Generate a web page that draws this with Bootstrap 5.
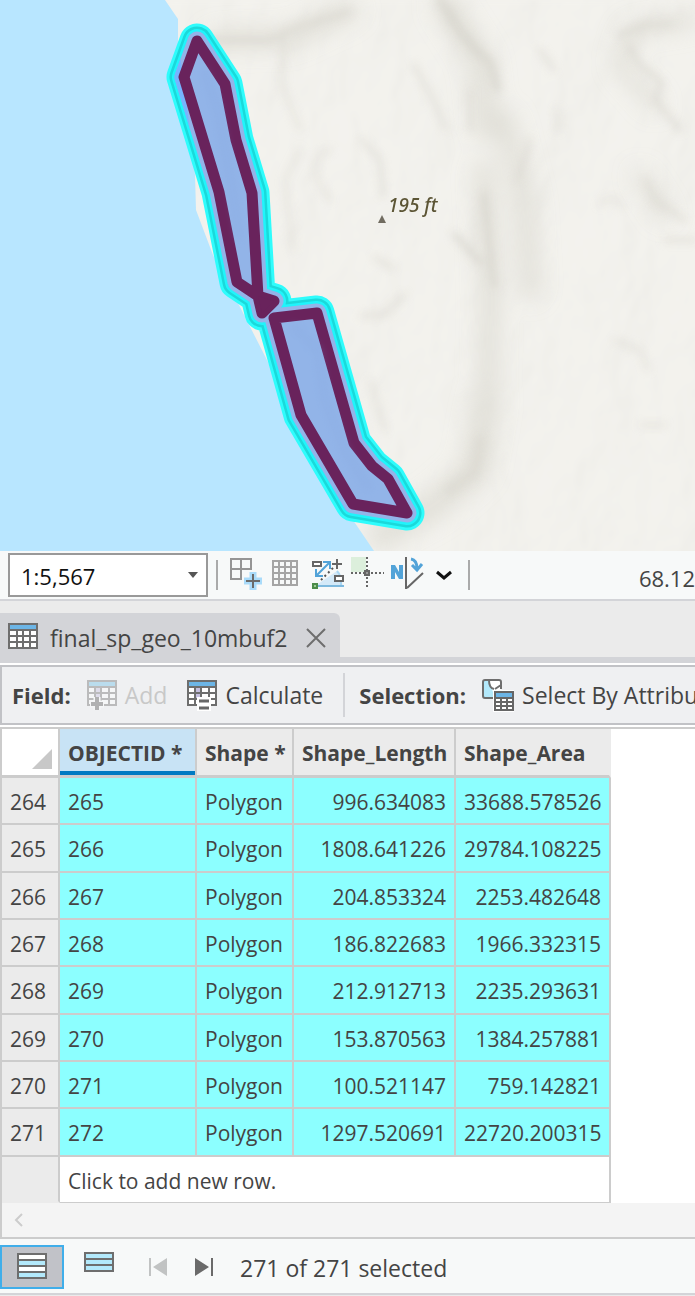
<!DOCTYPE html>
<html lang="en">
<head>
<meta charset="utf-8">
<meta name="viewport" content="width=device-width, initial-scale=1">
<title>final_sp_geo_10mbuf2</title>
<link href="https://cdn.jsdelivr.net/npm/bootstrap@5.3.0/dist/css/bootstrap.min.css" rel="stylesheet">
<style>
  body { font-family: "Open Sans", "Noto Sans", sans-serif; font-size: 23px; line-height: 28px; color: #444; background: #ebebeb; overflow-x: hidden; }
  button, select { font: inherit; color: inherit; }
  .plain-btn { background: none; border: 0; padding: 0; display: flex; align-items: center; white-space: nowrap; }
  svg { display: block; flex: none; }
  .map-view { height: 551px; background: #f2f2ec; }
  .map-label { font: italic 500 19px "Noto Sans", sans-serif; fill: #5c5535; }
  .map-bar { height: 50px; background: #f7f9f9; border-bottom: 2px solid #d3d4d8; padding: 2px 0 2px 8px; }
  .map-bar .plain-btn { padding-bottom: 4px; }
  .map-bar .more-btn { padding-bottom: 0; margin-left: 8px; }
  .scale-box { position: relative; width: 200px; height: 44px; }
  .scale-box select { appearance: none; width: 100%; height: 100%; border: 2px solid #999; background: #fff; color: #111; padding: 2px 11px 0; border-radius: 0; font-size: 22px; }
  .scale-box::after { content: ""; position: absolute; right: 10px; top: 19px; border: 5px solid transparent; border-top: 6px solid #555; border-bottom: 0; pointer-events: none; }
  .coords { font-size: 22px; padding-top: 5px; }
  .bar-rule { width: 2px; height: 30px; background: #aaa; }
  .tab-strip { height: 62px; padding-top: 12px; border-bottom: 6px solid #d3d4d8; }
  .view-tab { width: 340px; height: 50px; background: #d3d4d8; border-top-right-radius: 6px; padding: 0 13px 0 8px; margin-bottom: -6px; gap: 12px; }
  .field-bar { height: 60px; margin: 2px 0; background: #eff0f2; border: 2px solid #c1c2c6; border-right: 0; padding-left: 10px; white-space: nowrap; overflow: hidden; }
  .field-bar > * { flex: none; }
  .bar-title { font-size: 22px; }
  .calc-btn { margin: 0 20px; }
  .select-title { margin-left: 14px; }
  .add-text { color: #c8c8c8; }
  .panel-gap { background: #fff; }
  .field-rule { width: 2px; height: 44px; background: #d3d4d8; }
  .grid-frame { border: 2px solid #ccc; border-right: 0; background: #fff; }
  .attr-grid { width: 609px; table-layout: fixed; border-collapse: separate; border-spacing: 0; white-space: nowrap; font-size: 21px; line-height: 24px; }
  .attr-grid th, .attr-grid td { padding: 2px 8px 0; border-right: 2px solid #ccc; border-bottom: 2px solid #ccc; }
  .attr-grid thead th { height: 49px; background: #ebebeb; border-bottom: 3px solid #ccc; font-weight: 700; }
  .attr-grid thead th:first-child { background: #fff; vertical-align: bottom; padding: 0 6px 6px; }
  .attr-grid thead th:last-child { border-right-color: #ebebeb; }
  .attr-grid thead .sorted { background: #c8e3f5; box-shadow: inset 0 -4px #007ac2; }
  .attr-grid tbody tr { height: 47px; }
  .attr-grid tbody tr:nth-child(3n+2) { height: 48px; }
  .attr-grid tbody td { background: #8cffff; }
  .attr-grid tbody th, .attr-grid tfoot th { background: #ebebeb; font-weight: 400; }
  .attr-grid tfoot tr { height: 46px; }
  .attr-grid tfoot th { border-bottom-color: #ebebeb; }
  .attr-grid tfoot td { border-bottom-width: 1px; background: #fff; }
  .scroll-row { height: 34px; background: #f4f4f4; padding-left: 12px; }
  .status-bar { height: 56px; background: #f7f9f9; border-bottom: 2px solid #d3d4d8; padding-top: 2px; }
  .mode-btn { width: 64px; height: 44px; justify-content: center; padding-bottom: 2px; }
  .mode-btn.current { background: #c1c2c8; border: 2px solid #40aeea; }
  .mode-btn.other { margin-left: 3px; padding-bottom: 4px; }
  .first-btn { margin-left: 12px; }
  .sel-count { margin-left: 21px; padding-top: 2px; }
</style>
</head>
<body>
<main>
  <section class="map-view" aria-label="Map">
    <svg width="100%" height="551" viewBox="0 0 695 551" preserveAspectRatio="xMinYMin slice">
      <defs>
        <filter id="soft" x="-20%" y="-20%" width="140%" height="140%"><feGaussianBlur stdDeviation="4"/></filter>
        <filter id="soft-wide" x="-50%" y="-50%" width="200%" height="200%"><feGaussianBlur stdDeviation="11"/></filter>
        <filter id="relief" x="0" y="0" width="100%" height="100%">
          <feTurbulence type="fractalNoise" baseFrequency=".014 .008" numOctaves="4" seed="8"/>
          <feDiffuseLighting surfaceScale="14" lighting-color="#fff"><feDistantLight azimuth="225" elevation="60"/></feDiffuseLighting>
          <feGaussianBlur stdDeviation="2"/>
        </filter>
        <path id="sea" d="M0 0H165L178 19V40L190 130L195 175L196 210L213 255L240 307L268 362L300 440L355 523L374 551H0Z"/>
        <clipPath id="sea-clip"><use href="#sea"/></clipPath>
        <path id="parcels" stroke-linejoin="round" d="M197 41L225 84L236 140L252 193L258 296L237 282L219 192L184 77ZM258 296L274 301L262 313ZM274 318L317 313L354 443L372 466L388 479L407 513L353 504L301 415Z"/>
      </defs>
      <rect width="2400" height="1300" fill="#f3f2ed"/>
      <rect width="2400" height="1300" filter="url(#relief)" opacity=".07"/>
      <g fill="none" stroke="#dcdad2" stroke-linecap="round" filter="url(#soft-wide)" opacity=".75">
        <path stroke-width="24" d="M445 5L480 60L487 130"/>
        <path stroke-width="20" d="M484 170L488 240L490 300L488 400M505 120L525 200L530 290M215 40L290 38L350 10"/>
        <path stroke-width="14" d="M695 20L630 30L620 65L655 105M640 175L665 215"/>
        <path stroke-width="28" d="M487 400L475 470L435 505L380 535"/>
      </g>
      <g fill="none" stroke="#d3d0c8" stroke-linecap="round" filter="url(#soft)" opacity=".6">
        <path stroke-width="9" d="M440 0L462 34L476 50L490 62L497 88"/>
        <path stroke-width="7" d="M484 195L488 230L491 262L494 285M455 235L480 262"/>
        <path stroke-width="4" d="M414 65L433 100L447 130M362 140L380 160L383 195M540 50L554 70M558 110L557 130M470 90V130M530 140L518 180"/>
        <path stroke-width="5" d="M620 35L645 25L672 24M628 45L640 65L662 82L655 100L680 130M200 40L270 40L300 26L350 12"/>
        <path stroke-width="4" d="M646 180L655 200L685 220M665 240H695M362 316L386 314L404 295M375 258L392 268"/>
        <path stroke-width="3" d="M284 40L282 85L300 130M300 150L285 180L293 250M330 150Q300 160 330 200M370 380L385 430"/>
        <path stroke-width="12" d="M450 490L475 472L480 440" opacity=".6"/>
        <path stroke-width="3" d="M600 205Q615 190 622 208M615 340L640 350L648 370M640 425H665"/>
      </g>
      <use href="#sea" fill="#b8e6ff"/>
      <use href="#parcels" fill="#2ff" stroke="#2ffcfc" stroke-width="35"/>
      <use href="#parcels" fill="none" stroke="#1bd9da" stroke-width="29"/>
      <use href="#parcels" fill="none" stroke="#20f4fb" stroke-width="24"/>
      <use href="#parcels" fill="#93b4e9" stroke="#93b4e9" stroke-width="19"/>
      <g clip-path="url(#sea-clip)"><use href="#parcels" fill="none" stroke="#76b4ff" stroke-width="19"/></g>
      <use href="#parcels" fill="#92b4e8" stroke="#69235c" stroke-width="11"/>
      <path d="M258 296L274 301L262 313Z" fill="#69235c"/>
      <g fill="none" stroke="#84a3dc" stroke-width="5" opacity=".3" filter="url(#soft)"><path d="M204 70L218 110L230 175L240 240M292 325L318 350L325 400L345 450L370 490"/></g>
      <path d="M382 215L386 223H378Z" fill="#716c60"/>
      <text class="map-label" x="388" y="212">195 ft</text>
    </svg>
  </section>

  <div class="map-bar d-flex align-items-center">
    <div class="scale-box flex-shrink-0">
      <select aria-label="Map scale"><option>1:5,567</option></select>
    </div>
    <div class="bar-rule ms-2"></div>
    <button class="plain-btn ms-2 pe-2" aria-label="Add grid">
      <svg width="38" height="36" viewBox="0 0 38 36"><g fill="none" stroke="#959595" stroke-width="2"><path d="M5 4H25V14H5ZM15 4V24H5V14"/></g><path d="M27 17V35M18 26H36" stroke="#a9dbfa" stroke-width="7"/><path d="M27 19V33M20 26H34" stroke="#6b6b6b" stroke-width="2"/></svg>
    </button>
    <button class="plain-btn" aria-label="Grid">
      <svg width="38" height="36" viewBox="0 0 38 36"><path d="M1 6H25V30H1ZM7 6V30M13 6V30M19 6V30M1 12H25M1 18H25M1 24H25" fill="none" stroke="#a5a5a5" stroke-width="2"/></svg>
    </button>
    <button class="plain-btn" aria-label="Dynamic constraints">
      <svg width="40" height="36" viewBox="0 0 40 36"><path d="M5 31L27 16L33 31Z" fill="#d3e9f8"/><path d="M27 16Q32 21 31 31" fill="none" stroke="#a9d6f3" stroke-width="2"/><path d="M5 31H34" stroke="#7db9de" stroke-width="2"/><path d="M7 20L19 8M13 7H20V14M6 14V21H13" fill="none" stroke="#52a3d8" stroke-width="2"/><path d="M3 7H11V11H3ZM25 21H33V26H25Z" fill="#fff" stroke="#666" stroke-width="2"/><path d="M27 4V14M22 9H32" stroke="#666" stroke-width="2"/><path d="M11 25L24 12" stroke="#555" stroke-width="2" stroke-dasharray="2 3"/><path d="M3 29H7V33H3Z" fill="#9cce94" stroke="#4c8c4a" stroke-width="2"/></svg>
    </button>
    <button class="plain-btn" aria-label="Snapping">
      <svg width="40" height="36" viewBox="0 0 40 36"><path d="M1 2H16V17H1Z" fill="#dcefdc"/><path d="M17 2V34M1 18H34" stroke="#666" stroke-width="2" stroke-dasharray="2 2"/><path d="M15 16H19V20H15Z" fill="#999" stroke="#666" stroke-width="2"/></svg>
    </button>
    <button class="plain-btn" aria-label="North correction">
      <svg width="38" height="36" viewBox="0 0 38 36"><path d="M1 10H5L9 17V10H13V24H9L5 17V24H1Z" fill="#52a3d8"/><path d="M16 2V34M17 33L33 18" fill="none" stroke="#666" stroke-width="2"/><path d="M21 4Q27 5 27 14M22 10L27 15L32 9" fill="none" stroke="#52a3d8" stroke-width="3"/></svg>
    </button>
    <button class="plain-btn more-btn" aria-label="More tools">
      <svg width="16" height="12" viewBox="0 0 16 12"><path d="M1 3L8 9L15 3" fill="none" stroke="#111" stroke-width="3"/></svg>
    </button>
    <div class="bar-rule ms-3"></div>
    <span class="coords text-nowrap ms-auto">68.12</span>
  </div>

  <div class="tab-strip">
    <div class="view-tab d-flex align-items-center">
      <svg width="30" height="30" viewBox="0 0 30 30"><path d="M1 1H29V25H1Z" fill="#fff"/><path d="M2 2H28V7H2Z" fill="#6cb5e6"/><path d="M1 1H29V25H1ZM1 7H29M1 13H29M1 19H29M9 7V25M15 7V25M22 7V25" fill="none" stroke="#6e6e6e" stroke-width="2"/></svg>
      <span>final_sp_geo_10mbuf2</span>
      <button class="plain-btn ms-auto" aria-label="Close tab">
        <svg width="22" height="22" viewBox="0 0 22 22"><path d="M2 2L20 20M20 2L2 20" stroke="#6e6e6e" stroke-width="2"/></svg>
      </button>
    </div>
  </div>

  <div class="panel-gap overflow-hidden">
    <div class="field-bar d-flex align-items-center">
      <strong class="bar-title">Field:</strong>
      <button class="plain-btn ms-3 gap-2" disabled>
        <svg width="30" height="32" viewBox="0 0 30 32" opacity=".4"><path d="M1 2H29V26H1Z" fill="#fff"/><path d="M2 3H28V8H2Z" fill="#6cc0e6"/><path d="M8 8H14V20H8Z" fill="#c5bfe0"/><path d="M1 2H29V26H1ZM1 8H29M1 14H29M1 20H29M8 8V26M14 8V26M22 8V26" fill="none" stroke="#6e6e6e" stroke-width="2"/><path d="M10 18V31M3 25H17" stroke="#fff" stroke-width="7"/><path d="M10 18V31M4 25H16" stroke="#555" stroke-width="4"/></svg>
        <span class="add-text">Add</span>
      </button>
      <button class="plain-btn calc-btn gap-2">
        <svg width="30" height="32" viewBox="0 0 30 32"><path d="M1 2H29V26H1Z" fill="#fff"/><path d="M2 3H28V8H2Z" fill="#6cb5e6"/><path d="M8 8H14V20H8Z" fill="#c5bfe0"/><path d="M1 2H29V26H1ZM1 8H29M1 14H29M1 20H29M8 8V26M14 8V26M22 8V26" fill="none" stroke="#6e6e6e" stroke-width="2"/><path d="M10 18H24V32H10Z" fill="#fff"/><path d="M12 22H22M12 29H22" stroke="#666" stroke-width="3"/></svg>
        <span>Calculate</span>
      </button>
      <div class="field-rule"></div>
      <strong class="bar-title select-title">Selection:</strong>
      <button class="plain-btn ms-3 gap-2">
        <svg width="32" height="34" viewBox="0 0 32 34"><path d="M1 2H19V20H1Z" fill="#fff"/><path d="M2 3H7L11 14V20H2Z" fill="#b3e9fb"/><path d="M12 20H3Q1 20 1 18V4Q1 2 3 2H17Q19 2 19 4V11M7 2Q7 10 12 11M13 11L19 7" fill="none" stroke="#6e6e6e" stroke-width="2"/><path d="M11 12H33V34H11Z" fill="#fff"/><path d="M13 14H31V32H13Z" fill="#fff"/><path d="M14 15H30V20H14Z" fill="#6cb5e6"/><path d="M13 14H31V32H13ZM13 20H31M13 24H31M13 28H31M19 20V32M25 20V32" fill="none" stroke="#666" stroke-width="2"/></svg>
        <span>Select By Attributes</span>
      </button>
    </div>
  </div>

  <div class="grid-frame">
    <table class="attr-grid">
      <colgroup><col style="width:58px"><col style="width:137px"><col style="width:97px"><col style="width:162px"><col style="width:155px"></colgroup>
      <thead><tr>
        <th><svg class="ms-auto" width="20" height="20" viewBox="0 0 20 20"><path d="M20 0V20H0Z" fill="#c8c8c8"/></svg></th>
        <th class="sorted">OBJECTID *</th><th>Shape *</th><th>Shape_Length</th><th>Shape_Area</th>
      </tr></thead>
      <tbody>
        <tr><th>264</th><td>265</td><td>Polygon</td><td class="text-end">996.634083</td><td class="text-end">33688.578526</td></tr>
        <tr><th>265</th><td>266</td><td>Polygon</td><td class="text-end">1808.641226</td><td class="text-end">29784.108225</td></tr>
        <tr><th>266</th><td>267</td><td>Polygon</td><td class="text-end">204.853324</td><td class="text-end">2253.482648</td></tr>
        <tr><th>267</th><td>268</td><td>Polygon</td><td class="text-end">186.822683</td><td class="text-end">1966.332315</td></tr>
        <tr><th>268</th><td>269</td><td>Polygon</td><td class="text-end">212.912713</td><td class="text-end">2235.293631</td></tr>
        <tr><th>269</th><td>270</td><td>Polygon</td><td class="text-end">153.870563</td><td class="text-end">1384.257881</td></tr>
        <tr><th>270</th><td>271</td><td>Polygon</td><td class="text-end">100.521147</td><td class="text-end">759.142821</td></tr>
        <tr><th>271</th><td>272</td><td>Polygon</td><td class="text-end">1297.520691</td><td class="text-end">22720.200315</td></tr>
      </tbody>
      <tfoot><tr><th></th><td colspan="4">Click to add new row.</td></tr></tfoot>
    </table>
    <div class="scroll-row d-flex align-items-center">
      <button class="plain-btn" aria-label="Scroll left"><svg width="12" height="14" viewBox="0 0 12 14"><path d="M8 1L2 7L8 13" fill="none" stroke="#ccc" stroke-width="2"/></svg></button>
    </div>
  </div>

  <div class="status-bar d-flex align-items-center">
    <button class="plain-btn mode-btn current" aria-label="Show all records">
      <svg width="30" height="26" viewBox="0 0 30 26"><path d="M1 1H29V25H1Z" fill="#fff"/><path d="M1 7H29V13H1ZM1 19H29V25H1Z" fill="#b3e9fb"/><path d="M1 1H29V25H1ZM1 7H29M1 13H29M1 19H29" fill="none" stroke="#6e6e6e" stroke-width="2"/></svg>
    </button>
    <button class="plain-btn mode-btn other" aria-label="Show selected records">
      <svg width="30" height="26" viewBox="0 0 30 26"><path d="M1 1H29V19H1ZM1 7H29M1 13H29" fill="#b3e9fb" stroke="#6e6e6e" stroke-width="2"/></svg>
    </button>
    <button class="plain-btn first-btn" aria-label="First record"><svg width="30" height="20" viewBox="0 0 30 20"><path d="M6 1H8V19H6ZM24 1V19L10 10Z" fill="#c1c3c3"/></svg></button>
    <button class="plain-btn ms-3" aria-label="Last record"><svg width="30" height="20" viewBox="0 0 30 20"><path d="M6 1V19L20 10ZM22 1H24V19H22Z" fill="#6a6a6a"/></svg></button>
    <span class="sel-count">271 of 271 selected</span>
  </div>
</main>
<script src="https://cdn.jsdelivr.net/npm/bootstrap@5.3.0/dist/js/bootstrap.bundle.min.js"></script>
</body>
</html>
